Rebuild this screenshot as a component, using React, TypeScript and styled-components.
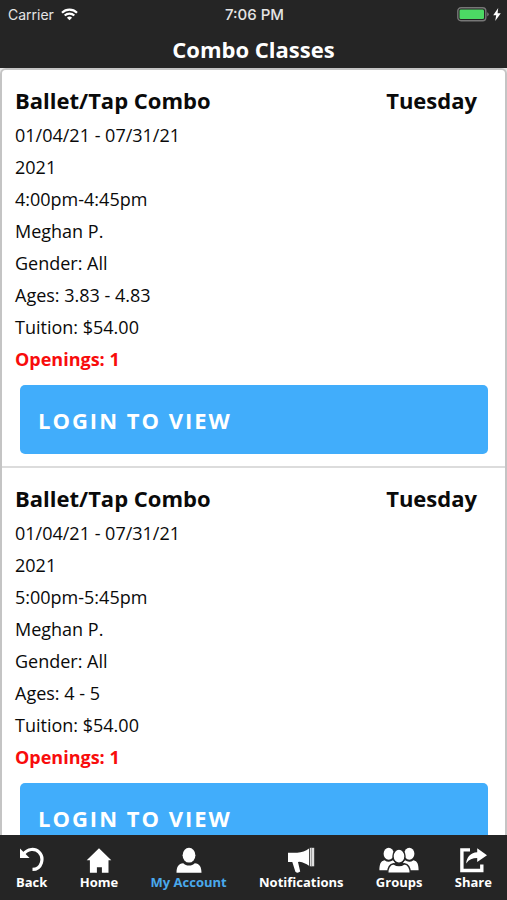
import React from "react";
import styled, { createGlobalStyle } from "styled-components";

const GlobalStyle = createGlobalStyle`
  *, *::before, *::after { box-sizing: border-box; }
  body {
    margin: 0;
    background: #252525;
    font-family: "Open Sans", "Noto Sans", sans-serif;
    color: #0a0a0a;
  }
`;

const Screen = styled.div`
  display: flex;
  flex-direction: column;
  height: 100vh;
`;

const Header = styled.header`
  flex: none;
  background: #252525;
  color: #fff;
`;

const StatusBar = styled.div`
  display: grid;
  grid-template-columns: 1fr auto 1fr;
  align-items: center;
  height: 28px;
  padding: 0 6px 0 8px;
  font-family: Inter, Roboto, sans-serif;
  font-size: 14px;
  color: #e4e4e4;
`;

const Carrier = styled.div`
  display: flex;
  align-items: center;
  gap: 7px;
`;

const Clock = styled.time`
  font-size: 15px;
  font-weight: 500;
`;

const Power = styled.div`
  display: flex;
  align-items: center;
  justify-content: flex-end;
  gap: 4px;
`;

const ScreenTitle = styled.h1`
  margin: 0;
  padding: 7px 0 5px;
  font-size: 22px;
  line-height: 28px;
  font-weight: 700;
  text-align: center;
`;

const ListFrame = styled.div`
  display: flex;
  flex-direction: column;
  flex: 1;
  min-height: 0;
  background: #e6e6e6;
`;

const ClassList = styled.main`
  flex: 1;
  min-height: 0;
  overflow-y: auto;
  scrollbar-width: none;
  background: #fff;
  border: 2px solid #c4c4c4;
  border-bottom: 0;
  border-radius: 6px 6px 0 0;
`;

const ClassCard = styled.article`
  padding: 14px 17px 12px 13px;
  border-bottom: 2px solid #dcdcdc;
`;

const CardHeading = styled.div`
  display: flex;
  justify-content: space-between;
  margin-bottom: 3px;
  padding-right: 11px;
  font-size: 22px;
  line-height: 32px;
  font-weight: 700;
`;

const ClassName = styled.h2`
  margin: 0;
  font: inherit;
`;

const Detail = styled.p<{ $alert?: boolean }>`
  margin: 0;
  font-size: 18px;
  line-height: 32px;
  font-weight: ${(p) => (p.$alert ? 700 : 400)};
  color: ${(p) => (p.$alert ? "#f80c0c" : "inherit")};
`;

const LoginButton = styled.button`
  display: block;
  width: calc(100% - 5px);
  height: 69px;
  margin: 10px 0 0 5px;
  padding: 0 18px;
  border: 0;
  border-radius: 5px;
  background: #41adfb;
  color: #fff;
  font-family: inherit;
  font-size: 22px;
  font-weight: 700;
  letter-spacing: 2px;
  text-align: left;
  cursor: pointer;
`;

const TabBar = styled.nav`
  flex: none;
  display: flex;
  justify-content: space-between;
  height: 65px;
  padding: 11px 15px 0 16px;
  background: #252525;
`;

const Tab = styled.a<{ $active?: boolean }>`
  display: flex;
  flex-direction: column;
  align-items: center;
  font-size: 13px;
  line-height: 17px;
  font-weight: 700;
  text-decoration: none;
  color: ${(p) => (p.$active ? "#4aa9ec" : "#fff")};
`;

const TabIcon = styled.svg`
  display: block;
  height: 28px;
  fill: #fff;
`;

const WifiIcon = () => (
  <svg width="17" height="13" viewBox="0 0 17 13" fill="none" stroke="#fff" strokeWidth="2.2" aria-hidden="true">
    <path d="M1 4.7a10.8 10.8 0 0 1 15 0M3.7 7.5a7 7 0 0 1 9.6 0" />
    <path d="M8.5 12.2 5.9 9.7a3.8 3.8 0 0 1 5.2 0z" fill="#fff" stroke="none" />
  </svg>
);

const BatteryIcon = () => (
  <svg width="32" height="15" viewBox="0 0 32 15" aria-label="Battery full">
    <rect x="0.8" y="0.8" width="28" height="13" rx="3.2" fill="none" stroke="#777" strokeWidth="1.4" />
    <rect x="2.5" y="2.5" width="24.5" height="9.6" rx="1.4" fill="#4cd964" />
    <path d="M30.2 5.2q1.5 .7 1.5 2.1t-1.5 2.1z" fill="#777" />
  </svg>
);

const BoltIcon = () => (
  <svg width="8" height="13" viewBox="0 0 8 13" fill="#fff" aria-label="Charging">
    <path d="M5.2 0 .2 7.2h3L2.2 13 7.8 5.2H4.6z" />
  </svg>
);

const BackIcon = () => (
  <TabIcon width="26" viewBox="0 0 26 28" aria-hidden="true">
    <path d="M4.5 8.2C8.5 2.4 16 2.1 20 6.2c5.6 5.6 2.8 17.2-6.5 17.2" fill="none" stroke="#fff" strokeWidth="3.2" />
    <path d="M1 2.5V12h9.6z" />
  </TabIcon>
);

const HomeIcon = () => (
  <TabIcon width="26" viewBox="0 0 26 28" aria-hidden="true">
    <path d="M13 2.2 25.3 14.2h-2.8v12.5h-6.6v-5.4h-5v5.4H3.9V14.2H.7z" />
  </TabIcon>
);

const AccountIcon = () => (
  <TabIcon width="26" viewBox="0 0 26 28" aria-hidden="true">
    <ellipse cx="13" cy="9.2" rx="6.4" ry="7.4" />
    <path d="M7.2 17.2C8.8 18.7 10.7 19.5 13 19.5s4.2-.8 5.8-2.3c4.8.4 6.7 3.8 6.7 9.5H.5c0-5.7 1.9-9.1 6.7-9.5z" />
  </TabIcon>
);

const MegaphoneIcon = () => (
  <TabIcon width="28" viewBox="0 0 28 28" aria-hidden="true">
    <path d="M1 6.8h9.2c4.6-.5 8.4-2 11.8-4.4v17.4c-3-2.3-6-3.6-9.4-4.1L11 15.9l2.2 9.7q-2.5 2.2-4.8.2L5.3 16H1z" />
    <path d="M22.8 1.8h4.4v18.5h-4.4z" fill="#ddd" />
    <path d="M24.2 1.8h.6v18.5h-.6z" fill="#777" />
  </TabIcon>
);

const GroupsIcon = () => (
  <TabIcon width="40" viewBox="0 0 40 28" aria-hidden="true">
    <ellipse cx="9.7" cy="7.7" rx="5.1" ry="6" />
    <ellipse cx="30.3" cy="7.7" rx="5.1" ry="6" />
    <path d="M5.5 14.2q4.2 3 8.5.1l2 2.3-6.2 7.7H.4c0-5.9 1.2-9.4 5.1-10.1zM34.5 14.2q-4.2 3-8.5.1l-2 2.3 6.2 7.7h9.4c0-5.9-1.2-9.4-5.1-10.1z" />
    <g stroke="#252525" strokeWidth="1.4">
      <ellipse cx="20" cy="10.2" rx="6" ry="7.1" />
      <path d="M14.7 17.8q5.3 3.6 10.6 0c4.4.7 6 3.8 6 9.5H8.7c0-5.7 1.6-8.8 6-9.5z" />
    </g>
  </TabIcon>
);

const ShareIcon = () => (
  <TabIcon width="30" viewBox="0 0 30 28" aria-hidden="true">
    <path d="M12 3.9H3.9v20.6h19.9v-6" fill="none" stroke="#fff" strokeWidth="3.4" />
    <path d="M19.2 2.2 29 9.2l-9.8 6.7v-3.8c-4.6 0-8.2 1.5-11 5.3.6-6.8 4.6-10.8 11-11.2z" />
  </TabIcon>
);

const classes = [
  { id: 1, time: "4:00pm-4:45pm", ages: "3.83 - 4.83" },
  { id: 2, time: "5:00pm-5:45pm", ages: "4 - 5" },
];

const tabs = [
  { label: "Back", Icon: BackIcon },
  { label: "Home", Icon: HomeIcon },
  { label: "My Account", Icon: AccountIcon, active: true },
  { label: "Notifications", Icon: MegaphoneIcon },
  { label: "Groups", Icon: GroupsIcon },
  { label: "Share", Icon: ShareIcon },
];

export default function App() {
  return (
    <Screen>
      <GlobalStyle />
      <Header>
        <StatusBar>
          <Carrier>
            Carrier
            <WifiIcon />
          </Carrier>
          <Clock>7:06 PM</Clock>
          <Power>
            <BatteryIcon />
            <BoltIcon />
          </Power>
        </StatusBar>
        <ScreenTitle>Combo Classes</ScreenTitle>
      </Header>
      <ListFrame>
        <ClassList>
          {classes.map((c) => (
            <ClassCard key={c.id}>
              <CardHeading>
                <ClassName>Ballet/Tap Combo</ClassName>
                <span>Tuesday</span>
              </CardHeading>
              <Detail>01/04/21 - 07/31/21</Detail>
              <Detail>2021</Detail>
              <Detail>{c.time}</Detail>
              <Detail>Meghan P.</Detail>
              <Detail>Gender: All</Detail>
              <Detail>Ages: {c.ages}</Detail>
              <Detail>Tuition: $54.00</Detail>
              <Detail $alert>Openings: 1</Detail>
              <LoginButton type="button">LOGIN TO VIEW</LoginButton>
            </ClassCard>
          ))}
        </ClassList>
      </ListFrame>
      <TabBar>
        {tabs.map(({ label, Icon, active }) => (
          <Tab key={label} href="#" $active={active} aria-current={active ? "page" : undefined}>
            <Icon />
            {label}
          </Tab>
        ))}
      </TabBar>
    </Screen>
  );
}
